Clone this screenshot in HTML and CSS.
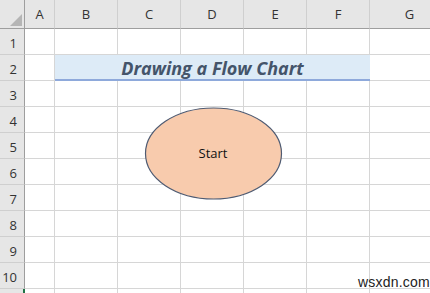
FILE: index.html
```html
<!DOCTYPE html>
<html>
<head>
    <title>Drawing a Flow Chart</title>
    <link rel="stylesheet" href="styles.css">
</head>
<body>
    <div class="sheet">
        <div class="grid">
            <div class="corner"><span class="corner-tri"></span></div>
            <div class="col-head">A</div>
            <div class="col-head">B</div>
            <div class="col-head">C</div>
            <div class="col-head">D</div>
            <div class="col-head">E</div>
            <div class="col-head">F</div>
            <div class="col-head">G</div>

            <div class="row-head">1</div>
            <div class="cell"></div><div class="cell"></div><div class="cell"></div><div class="cell"></div><div class="cell"></div><div class="cell"></div><div class="cell"></div>

            <div class="row-head">2</div>
            <div class="cell"></div>
            <div class="cell title">Drawing a Flow Chart</div>
            <div class="cell"></div>

            <div class="row-head">3</div>
            <div class="cell"></div><div class="cell"></div><div class="cell"></div><div class="cell"></div><div class="cell"></div><div class="cell"></div><div class="cell"></div>
            <div class="row-head">4</div>
            <div class="cell"></div><div class="cell"></div><div class="cell"></div><div class="cell"></div><div class="cell"></div><div class="cell"></div><div class="cell"></div>
            <div class="row-head">5</div>
            <div class="cell"></div><div class="cell"></div><div class="cell"></div><div class="cell"></div><div class="cell"></div><div class="cell"></div><div class="cell"></div>
            <div class="row-head">6</div>
            <div class="cell"></div><div class="cell"></div><div class="cell"></div><div class="cell"></div><div class="cell"></div><div class="cell"></div><div class="cell"></div>
            <div class="row-head">7</div>
            <div class="cell"></div><div class="cell"></div><div class="cell"></div><div class="cell"></div><div class="cell"></div><div class="cell"></div><div class="cell"></div>
            <div class="row-head">8</div>
            <div class="cell"></div><div class="cell"></div><div class="cell"></div><div class="cell"></div><div class="cell"></div><div class="cell"></div><div class="cell"></div>
            <div class="row-head">9</div>
            <div class="cell"></div><div class="cell"></div><div class="cell"></div><div class="cell"></div><div class="cell"></div><div class="cell"></div><div class="cell"></div>
            <div class="row-head">10</div>
            <div class="cell"></div><div class="cell"></div><div class="cell"></div><div class="cell"></div><div class="cell"></div><div class="cell"></div><div class="cell"></div>
            <div class="row-head selected"></div>
            <div class="cell"></div><div class="cell"></div><div class="cell"></div><div class="cell"></div><div class="cell"></div><div class="cell"></div><div class="cell"></div>
        </div>

        <!-- flowchart shape floating on the sheet -->
        <div class="shape">
            <svg width="139" height="93" viewBox="0 0 139 93">
                <ellipse cx="69.5" cy="46.5" rx="68" ry="45.5" fill="#f8cbad" stroke="#4f5b72" stroke-width="1.2"/>
            </svg>
            <span class="shape-label">Start</span>
        </div>

        <div class="watermark">wsxdn.com</div>
    </div>
</body>
</html>
```

FILE: styles.css
```css
body {
    margin: 0;
    padding: 0;
    background-color: #fff;
    font-family: 'Open Sans', 'Liberation Sans', sans-serif;
    overflow: hidden;
}
.sheet {
    position: relative;
    width: 430px;
    height: 293px;
    overflow: hidden;
}
.grid {
    display: grid;
    grid-template-columns: 25px 30px 63px 63px 63px 63px 63px 80px;
    grid-template-rows: 29px repeat(11, 26px);
}
.corner {
    background-color: #e6e6e6;
    border-right: 1px solid #9e9e9e;
    border-bottom: 1px solid #9e9e9e;
    box-sizing: border-box;
    position: relative;
}
.corner-tri {
    position: absolute;
    left: 10px;
    top: 14px;
    width: 0;
    height: 0;
    border-left: 12px solid transparent;
    border-bottom: 12px solid #b5b5b5;
}
.col-head {
    background-color: #e6e6e6;
    border-right: 1px solid #cfcfcf;
    border-bottom: 1px solid #9e9e9e;
    box-sizing: border-box;
    display: flex;
    align-items: flex-end;
    justify-content: center;
    padding-bottom: 5px;
    font-size: 13px;
    color: #333;
}
.row-head {
    background-color: #e6e6e6;
    border-right: 1px solid #9e9e9e;
    border-bottom: 1px solid #cfcfcf;
    box-sizing: border-box;
    display: flex;
    align-items: center;
    justify-content: flex-end;
    padding-right: 7px;
    padding-top: 3px;
    font-size: 13px;
    color: #333;
}
.row-head.selected {
    border-right: 2px solid #217346;
}
.cell {
    border-right: 1px solid #d6d6d6;
    border-bottom: 1px solid #d6d6d6;
    box-sizing: border-box;
}
.title {
    grid-column: span 5;
    background-color: #ddebf7;
    border-right: none;
    border-bottom: 2px solid #8ea9db;
    display: flex;
    align-items: center;
    justify-content: center;
    padding-top: 1px;
    font-family: 'Open Sans', sans-serif;
    font-weight: bold;
    font-style: italic;
    font-size: 18px;
    color: #44546a;
}
.shape {
    position: absolute;
    left: 144px;
    top: 107px;
    width: 139px;
    height: 93px;
    display: flex;
    align-items: center;
    justify-content: center;
}
.shape svg {
    position: absolute;
    left: 0;
    top: 0;
}
.shape-label {
    position: relative;
    font-size: 13px;
    color: #111;
    margin-left: -1px;
    margin-top: -1px;
}
.watermark {
    position: absolute;
    left: 358px;
    top: 274px;
    font-family: 'Liberation Sans', sans-serif;
    font-size: 14px;
    letter-spacing: 0.2px;
    color: #222;
}
```
